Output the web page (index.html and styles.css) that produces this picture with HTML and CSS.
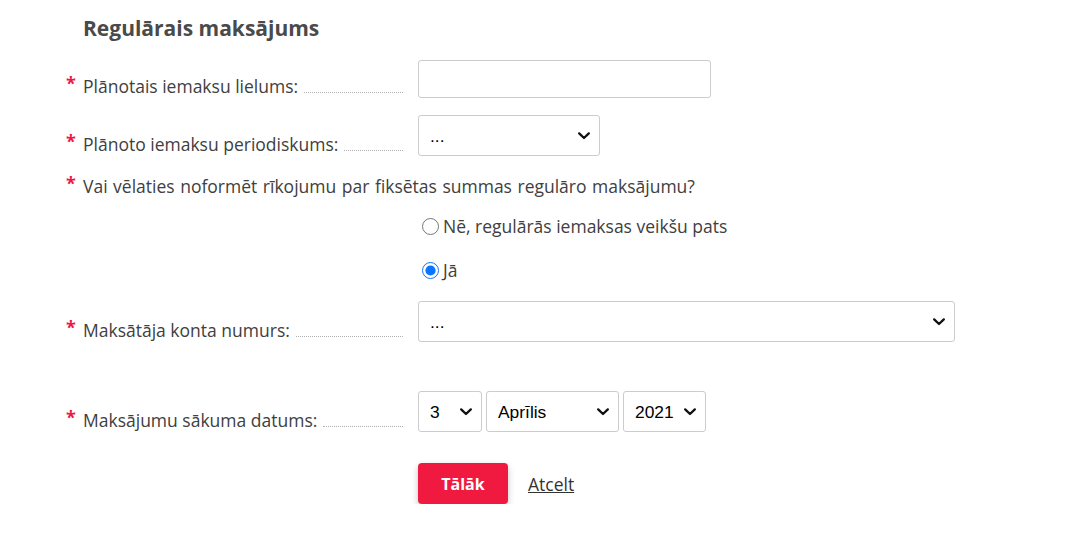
FILE: index.html
```html
<!DOCTYPE html>
<html lang="lv">
<head>
<meta charset="utf-8">
<title>Regulārais maksājums</title>
<link rel="stylesheet" href="styles.css">
</head>
<body>
<main class="form">
  <h2 class="title">Regulārais maksājums</h2>

  <div class="row row-1">
    <label class="label"><span class="req">*</span><span class="text">Plānotais iemaksu lielums:</span><span class="leader"></span></label>
    <input class="input input-amount" type="text">
  </div>

  <div class="row row-2">
    <label class="label"><span class="req">*</span><span class="text">Plānoto iemaksu periodiskums:</span><span class="leader"></span></label>
    <select class="select select-period"><option>...</option></select>
  </div>

  <div class="question"><span class="req">*</span><span class="text">Vai vēlaties noformēt rīkojumu par fiksētas summas regulāro maksājumu?</span></div>

  <div class="radio-row radio-1">
    <label class="radio"><input type="radio" name="order"><span>Nē, regulārās iemaksas veikšu pats</span></label>
  </div>
  <div class="radio-row radio-2">
    <label class="radio"><input type="radio" name="order" checked><span>Jā</span></label>
  </div>

  <div class="row row-3">
    <label class="label"><span class="req">*</span><span class="text">Maksātāja konta numurs:</span><span class="leader"></span></label>
    <select class="select select-account"><option>...</option></select>
  </div>

  <div class="row row-4">
    <label class="label"><span class="req">*</span><span class="text">Maksājumu sākuma datums:</span><span class="leader"></span></label>
    <div class="date">
      <select class="select select-day"><option>3</option></select>
      <select class="select select-month"><option>Aprīlis</option></select>
      <select class="select select-year"><option>2021</option></select>
    </div>
  </div>

  <div class="actions">
    <button class="btn-primary" type="button">Tālāk</button>
    <a class="link" href="#">Atcelt</a>
  </div>
</main>
</body>
</html>
```

FILE: styles.css
```css
html, body {
  margin: 0;
  padding: 0;
  background: #fff;
}

body {
  font-family: "Open Sans", "Liberation Sans", sans-serif;
  color: #404040;
  font-size: 17.5px;
}

.form {
  padding-left: 66px;
  width: 1000px;
}

.title {
  margin: 14px 0 0 17px;
  font-size: 21px;
  line-height: 28px;
  font-weight: 700;
  color: #4a4a4a;
}

.row {
  display: flex;
  align-items: flex-end;
}

.row-1 { margin-top: 18px; }
.row-2 { margin-top: 17px; }
.row-3 { margin-top: 19px; }
.row-4 { margin-top: 49px; }

.label {
  width: 337px;
  margin-right: 15px;
  display: flex;
  align-items: flex-end;
  line-height: 24px;
}

.req {
  width: 17px;
  flex: none;
  color: #ea1a40;
  font-weight: 700;
  font-size: 18px;
  line-height: 18px;
  align-self: flex-start;
  margin-top: 0;
}

.text {
  flex: none;
  white-space: nowrap;
}

.leader {
  flex: 1;
  border-bottom: 1px dotted #b0b0b0;
  margin: 0 0 5px 6px;
}

.input {
  box-sizing: border-box;
  height: 38px;
  border: 1px solid #cccccc;
  border-radius: 3px;
  background: #fff;
  padding: 0 12px;
  font: 17px "Liberation Sans", Arial, sans-serif;
}

.input-amount { width: 293px; }

.select {
  box-sizing: border-box;
  -webkit-appearance: none;
  appearance: none;
  height: 41px;
  border: 1px solid #cccccc;
  border-radius: 3px;
  background-color: #fff;
  background-image: url("data:image/svg+xml;utf8,<svg xmlns='http://www.w3.org/2000/svg' width='12' height='8' viewBox='0 0 12 8'><path d='M1.2 1.4 L6 6 L10.8 1.4' fill='none' stroke='%23111' stroke-width='2.3' stroke-linecap='round' stroke-linejoin='round'/></svg>");
  background-repeat: no-repeat;
  background-position: right 9px center;
  background-size: 12px 8px;
  padding: 0 28px 0 11px;
  font: 17.4px "Liberation Sans", Arial, sans-serif;
  color: #000;
  margin: 0;
}

.select-period { width: 182px; }
.select-account { width: 537px; }
.select-day { width: 64px; }
.select-month { width: 133px; }
.select-year { width: 83px; }

.date {
  display: flex;
  gap: 4px;
}

.question {
  display: flex;
  margin-top: 18px;
  line-height: 24px;
  word-spacing: 1px;
}

.radio-row {
  padding-left: 352px;
  line-height: 24px;
}

.radio-1 { margin-top: 16px; }
.radio-2 { margin-top: 20px; }

.radio {
  display: flex;
  align-items: center;
}

.radio input {
  width: 17px;
  height: 17px;
  margin: 0 4px 0 4px;
  accent-color: #0a75ff;
}

.actions {
  display: flex;
  align-items: center;
  padding-left: 352px;
  margin-top: 31px;
  gap: 20px;
}

.btn-primary {
  width: 90px;
  height: 41px;
  border: none;
  border-radius: 4px;
  background: #f01a41;
  color: #fff;
  font-family: "Open Sans", "Liberation Sans", sans-serif;
  font-weight: 700;
  font-size: 16px;
  box-shadow: 0 3px 7px rgba(0, 0, 0, 0.22);
  cursor: pointer;
}

.link {
  color: #333;
  text-decoration: underline;
  font-size: 17.5px;
  line-height: 24px;
}
```
